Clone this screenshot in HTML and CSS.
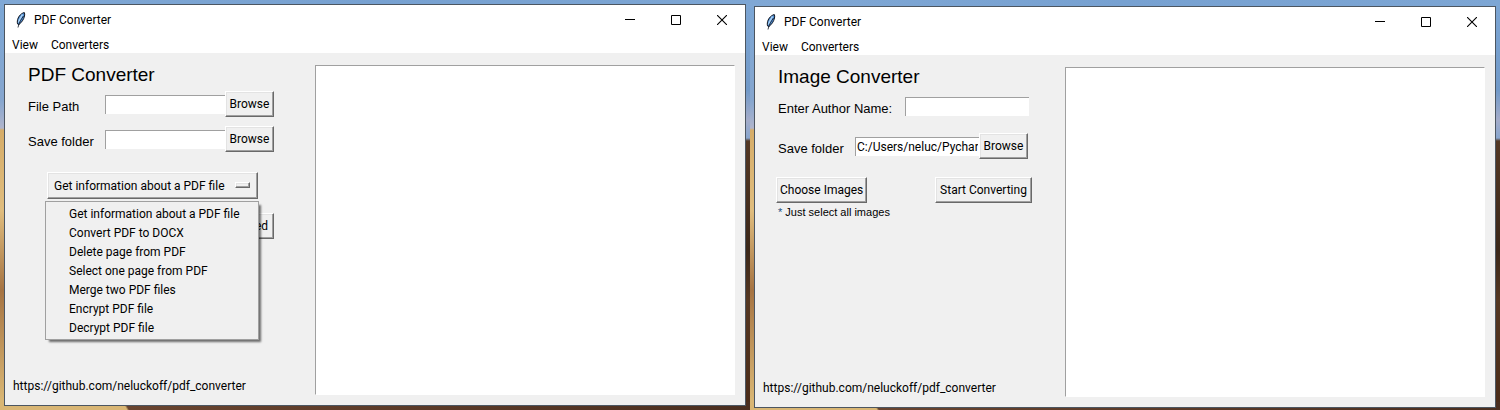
FILE: index.html
```html
<!DOCTYPE html>
<html lang="en">
<head>
<meta charset="utf-8">
<title>PDF Converter</title>
<link rel="stylesheet" href="styles.css">
</head>
<body>
<svg class="symbols" aria-hidden="true">
  <symbol id="feather" viewBox="0 0 16 16">
    <path d="M11.300 .5C8.500 1.200 5.500 4 4.600 7.500c-.4 2-.4 3.500 0 4.500l1.400.5C8.500 10.500 10.800 7.500 11.500 4c.3-1.500.3-2.500-.2-3.500z" fill="#4f8fd6" stroke="#10151f" stroke-width="1"/>
    <path d="M9.500 2.500C8 5 6.500 7.500 5.500 10.500" fill="none" stroke="#a9d0f5" stroke-width="1.500"/>
    <path d="M10.500 4C8.500 7 6 10 5 15.500" fill="none" stroke="#10151f" stroke-width=".8"/>
  </symbol>
  <symbol id="minimize" viewBox="0 0 10 10"><path d="M0 4.500h10" stroke="#000" fill="none"/></symbol>
  <symbol id="maximize" viewBox="0 0 10 10"><path d="M.5 .5h9v9h-9z" stroke="#000" fill="none"/></symbol>
  <symbol id="close" viewBox="0 0 10 10"><path d="M0 0l10 10M10 0L0 10" stroke="#000" stroke-width="1.100" fill="none"/></symbol>
</svg>
<main class="screens">
  <section class="desktop">
    <div class="window">
      <header class="titlebar">
        <svg class="app-icon"><use href="#feather"/></svg>
        <span class="title">PDF Converter</span>
        <button class="caption" aria-label="Minimize"><svg><use href="#minimize"/></svg></button>
        <button class="caption" aria-label="Maximize"><svg><use href="#maximize"/></svg></button>
        <button class="caption" aria-label="Close"><svg><use href="#close"/></svg></button>
      </header>
      <nav class="menubar"><button>View</button><button>Converters</button></nav>
      <div class="body">
        <form class="panel">
          <h1>PDF Converter</h1>
          <div class="row">
            <label for="file-path">File Path</label>
            <input class="entry" id="file-path" type="text">
            <button class="btn" type="button">Browse</button>
          </div>
          <div class="row next">
            <label for="pdf-folder">Save folder</label>
            <input class="entry" id="pdf-folder" type="text">
            <button class="btn" type="button">Browse</button>
          </div>
          <div class="option">
            <select class="option-select" aria-label="Action">
              <option>Get information about a PDF file</option>
            </select>
            <span class="indicator"></span>
            <ul class="popup">
              <li><button type="button">Get information about a PDF file</button></li>
              <li><button type="button">Convert PDF to DOCX</button></li>
              <li><button type="button">Delete page from PDF</button></li>
              <li><button type="button">Select one page from PDF</button></li>
              <li><button type="button">Merge two PDF files</button></li>
              <li><button type="button">Encrypt PDF file</button></li>
              <li><button type="button">Decrypt PDF file</button></li>
            </ul>
          </div>
          <button class="btn proceed" type="button">Proceed</button>
          <a class="link" href="https://github.com/neluckoff/pdf_converter">https://github.com/neluckoff/pdf_converter</a>
        </form>
        <textarea class="output" aria-label="Output" readonly></textarea>
      </div>
    </div>
  </section>
  <section class="desktop lower">
    <div class="window">
      <header class="titlebar">
        <svg class="app-icon"><use href="#feather"/></svg>
        <span class="title">PDF Converter</span>
        <button class="caption" aria-label="Minimize"><svg><use href="#minimize"/></svg></button>
        <button class="caption" aria-label="Maximize"><svg><use href="#maximize"/></svg></button>
        <button class="caption" aria-label="Close"><svg><use href="#close"/></svg></button>
      </header>
      <nav class="menubar"><button>View</button><button>Converters</button></nav>
      <div class="body">
        <form class="panel">
          <h1>Image Converter</h1>
          <div class="row author">
            <label for="author">Enter Author Name:</label>
            <input class="entry" id="author" type="text">
          </div>
          <div class="row folder">
            <label for="image-folder">Save folder</label>
            <input class="entry" id="image-folder" type="text" value="C:/Users/neluc/PycharmProjects">
            <button class="btn" type="button">Browse</button>
          </div>
          <div class="actions">
            <button class="btn choose" type="button">Choose Images</button>
            <button class="btn start" type="button">Start Converting</button>
          </div>
          <p class="note"><span class="star">*</span> Just select all images</p>
          <a class="link" href="https://github.com/neluckoff/pdf_converter">https://github.com/neluckoff/pdf_converter</a>
        </form>
        <textarea class="output" aria-label="Output" readonly></textarea>
      </div>
    </div>
  </section>
</main>
</body>
</html>
```
FILE: styles.css
```css
* { box-sizing: border-box; }

body {
  margin: 0;
  font: 12px/16px Roboto, "Open Sans", sans-serif;
  color: #000;
}

button, input, select, textarea {
  font: inherit;
  color: inherit;
  margin: 0;
  padding: 0;
  border: 0;
  border-radius: 0;
}

.symbols { display: none; }

.screens {
  display: grid;
  grid-template-columns: 1fr 1fr;
  min-height: 100vh;
}

/* Desktop wallpaper: sky over sand, with a dark dune on the right */
.desktop {
  display: flex;
  padding: 4px;
  background:
    linear-gradient(90deg, #80a8d5, #77a1d1 50%, #7da6d4) top / 100% 8px no-repeat,
    linear-gradient(60deg, #d9b674 110px, #69442f 112px, #4a2e1f) bottom / 100% 8px no-repeat,
    linear-gradient(#7ba7d6, #86a6cf 100px, #b0b5cd 128px, #d6ad69 130px, #e0bd7e 210px, #a67443 290px, #d9b674 400px) left / 8px 100% no-repeat,
    linear-gradient(#7da6d4, #7199c8 90px, #a4acc9 120px, #88a5cd 138px, #543824 141px, #3b2719 250px, #553722 300px, #4a2b18) right / 8px 100% no-repeat;
}

.desktop.lower { padding: 6px 4px 2px; }

.window {
  flex: 1;
  min-width: 0;
  display: flex;
  flex-direction: column;
  background: #f0f0f0;
  border: 1px solid #4c5661;
}

.titlebar {
  display: flex;
  align-items: center;
  height: 30px;
  padding-left: 8px;
  background: #fff;
}

.app-icon { width: 16px; height: 16px; }
.title { flex: 1; padding-left: 5px; }

.caption {
  display: grid;
  place-items: center;
  width: 46px;
  height: 29px;
  background: none;
}

.caption svg { width: 10px; height: 10px; }

.menubar {
  display: flex;
  gap: 13px;
  height: 18px;
  padding: 2px 0 0 7px;
  background: #fff;
}

.menubar button { background: none; }

.body {
  flex: 1;
  display: flex;
  padding-right: 10px;
}

.panel {
  width: 310px;
  display: flex;
  flex-direction: column;
  align-items: flex-start;
  padding: 11px 0 11px 23px;
}

h1 {
  margin: 0 0 5px;
  font: 19px/22px "Liberation Sans", Arial, sans-serif;
}

.row {
  display: grid;
  grid-template-columns: 77px 120px 49px;
  align-items: center;
  height: 26px;
}

.row.next { margin-top: 9px; }
.row.author { grid-template-columns: 127px 124px; }
.row.folder { grid-template-columns: 77px 124px 49px; margin-top: 14px; }

.row label {
  padding-top: 6px;
  font: 13px/16px "Liberation Sans", Arial, sans-serif;
}

.entry {
  width: 100%;
  height: 19px;
  margin-top: 1px;
  padding: 0 1px;
  background: #fff;
  border: 1px solid #a0a0a0;
  border-width: 1px 0 0 1px;
}

.btn {
  height: 26px;
  padding: 0 3px;
  white-space: nowrap;
  background: #f0f0f0;
  border: 1px solid;
  border-color: #fff #696969 #696969 #fff;
  box-shadow: inset -1px -1px #a0a0a0, inset 1px 1px #e3e3e3;
}

.option {
  position: relative;
  width: 211px;
  margin: 20px 0 14px 19px;
}

.option-select {
  display: block;
  appearance: none;
  width: 100%;
  height: 27px;
  padding: 0 6px;
  background: #f0f0f0;
  border: 1px solid;
  border-color: #fff #696969 #696969 #fff;
  box-shadow: inset -1px -1px #a0a0a0, inset 1px 1px #e3e3e3;
}

.indicator {
  position: absolute;
  top: 10px;
  right: 8px;
  width: 15px;
  height: 6px;
  border: 1px solid;
  border-color: #fff #696969 #696969 #fff;
  box-shadow: inset -1px -1px #a0a0a0, inset 1px 1px #e3e3e3;
  pointer-events: none;
}

.popup {
  position: absolute;
  z-index: 1;
  top: 29px;
  left: -2px;
  width: 214px;
  margin: 0;
  padding: 2px;
  list-style: none;
  background: #f0f0f0;
  border: 1px solid #a0a0a0;
  box-shadow: 3px 3px 2px -1px rgba(0, 0, 0, .55);
}

.popup button {
  display: block;
  width: 100%;
  height: 19px;
  padding-left: 21px;
  text-align: left;
  white-space: nowrap;
  background: none;
}

.proceed { width: 56px; margin-left: 190px; }

.actions {
  display: flex;
  justify-content: space-between;
  width: 256px;
  margin: 18px 0 0 -2px;
}

.choose { width: 91px; }
.start { width: 97px; }

.note {
  margin: 3px 0 0;
  font: 11px/13px "Liberation Sans", Arial, sans-serif;
}

.star { color: #1c4f80; }

.link {
  margin: auto 0 0 -15px;
  color: inherit;
  text-decoration: none;
}

.output {
  flex: 1;
  min-width: 0;
  margin: 12px 0 10px;
  background: #fff;
  border: 1px solid;
  border-color: #a0a0a0 #fff #fff #a0a0a0;
  resize: none;
  outline: 0;
}
```
